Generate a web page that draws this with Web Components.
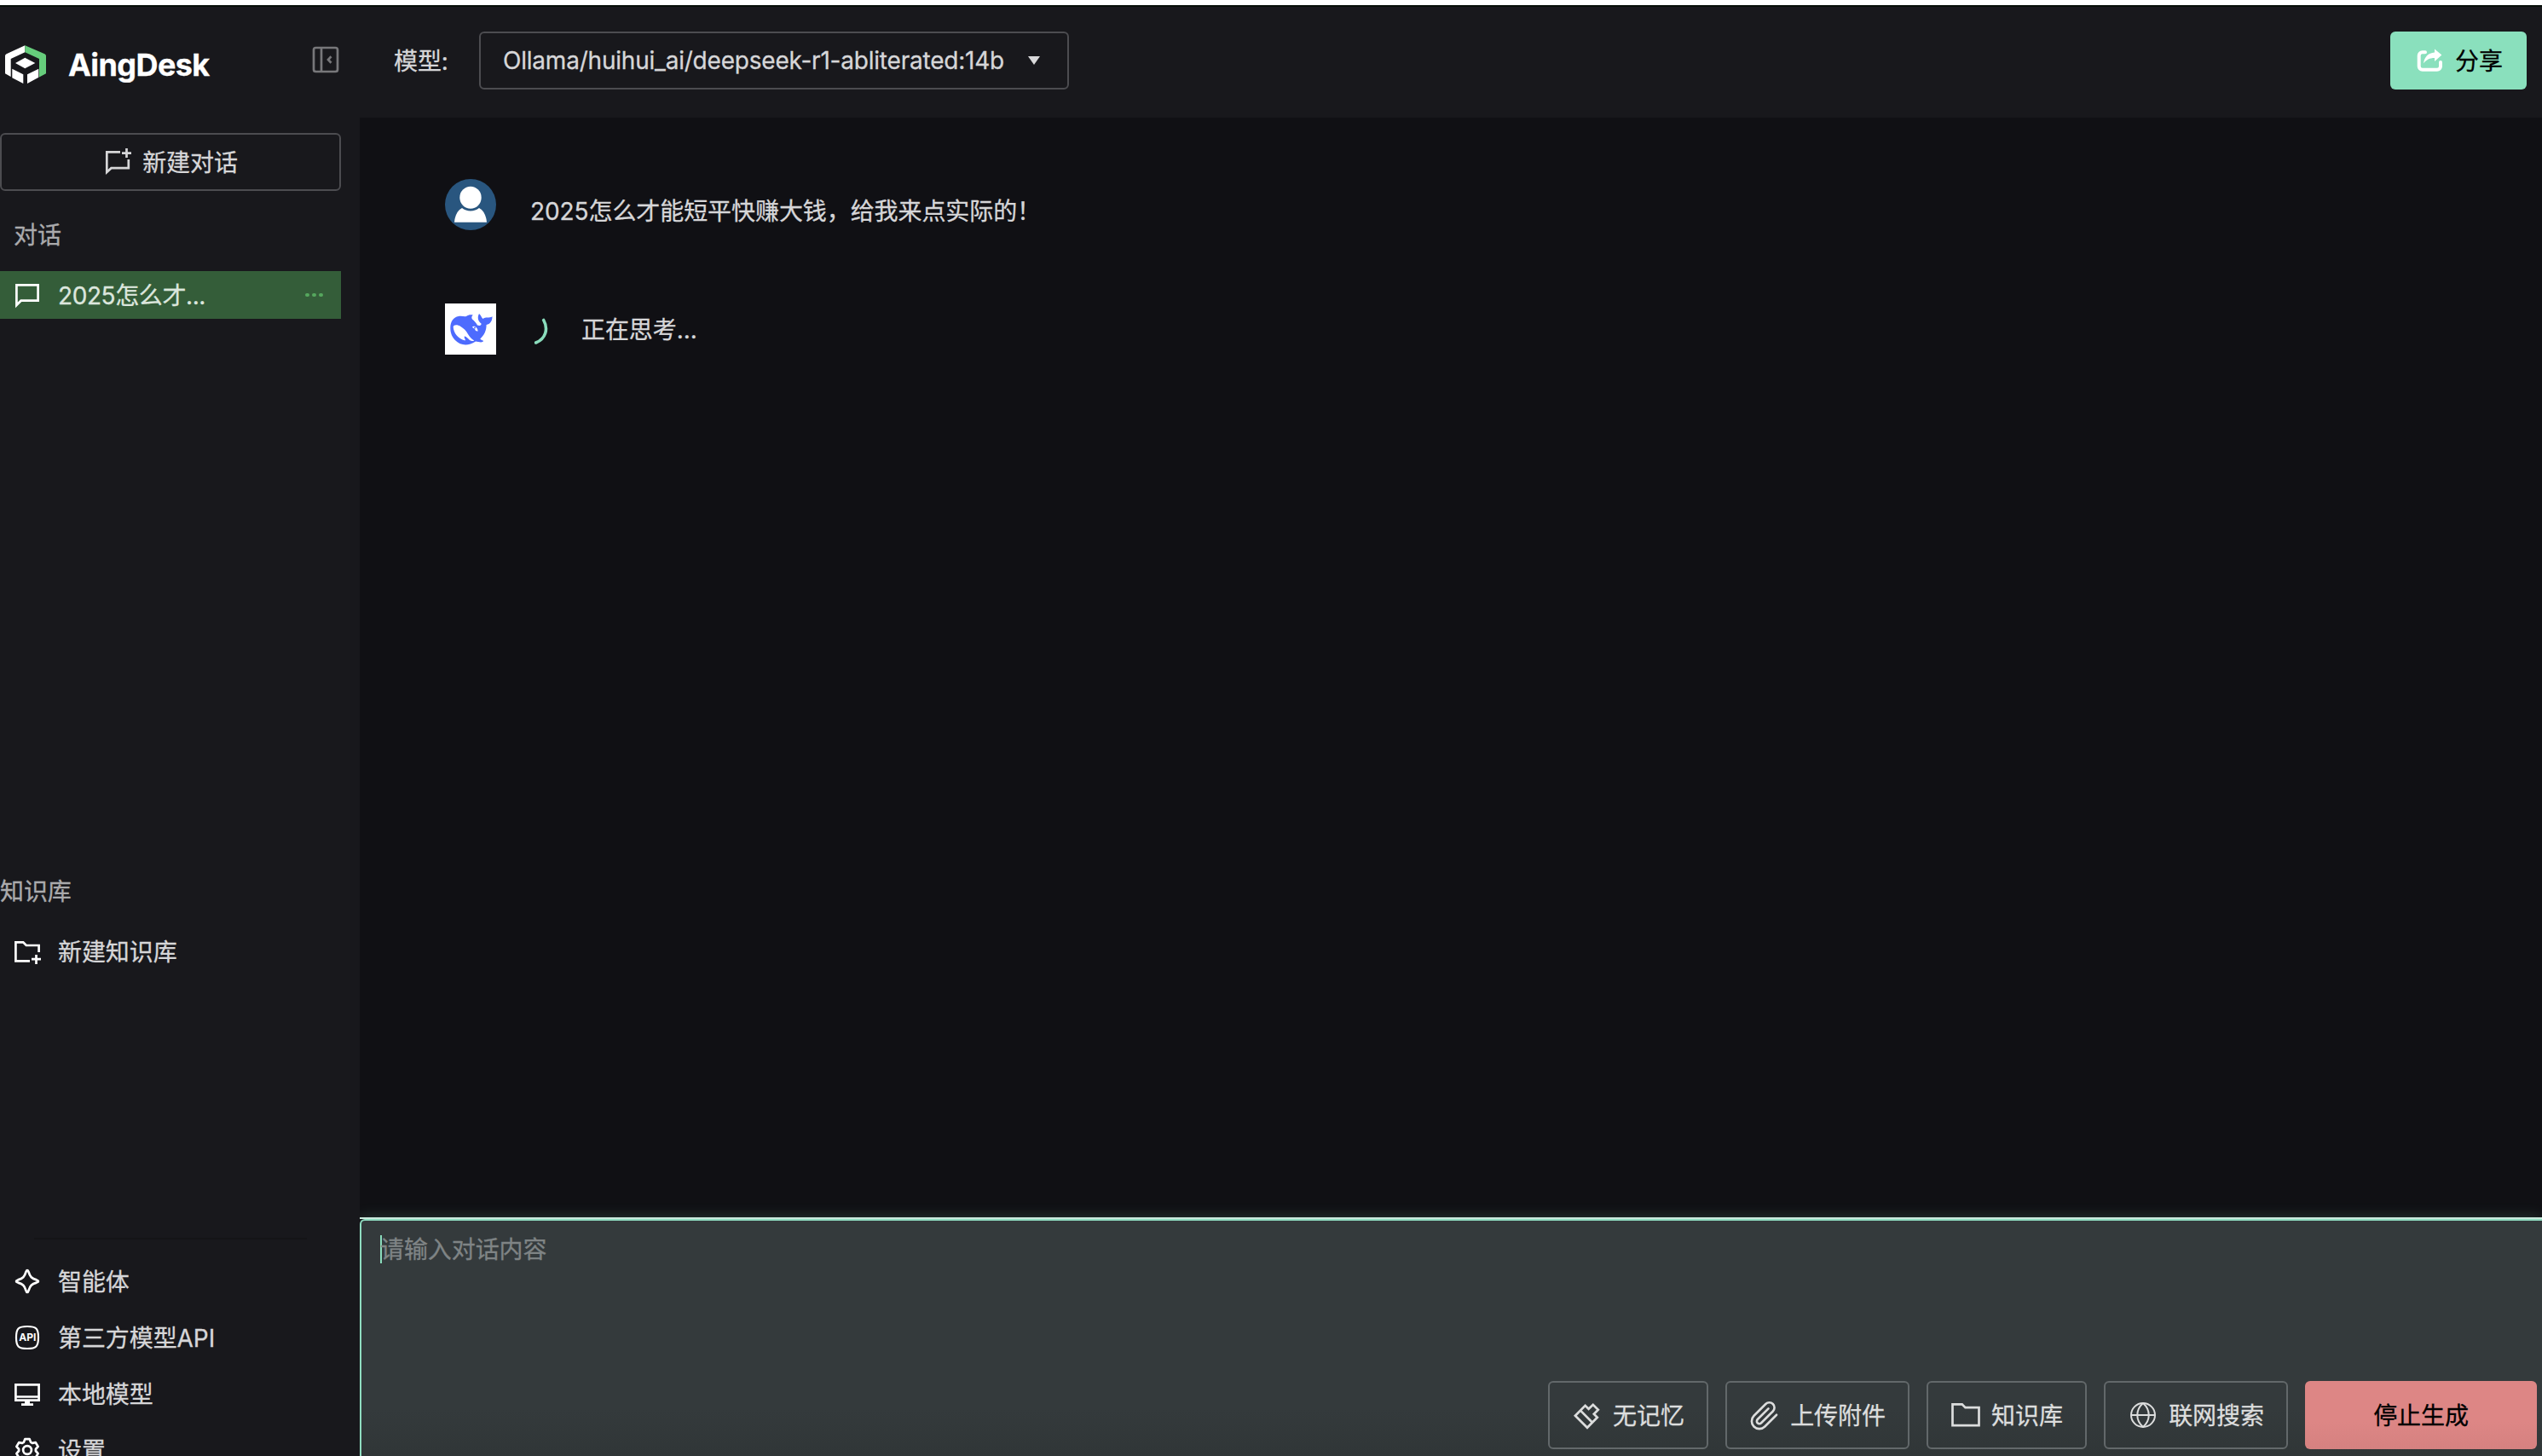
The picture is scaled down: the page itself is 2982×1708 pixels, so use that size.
<!DOCTYPE html>
<html lang="zh-CN">
<head>
<meta charset="utf-8">
<title>AingDesk</title>
<style>
    html, body {
        margin: 0;
        height: 100%;
        overflow: hidden;
        background: #101014;
    }
    body {
        font-family: Inter, "Noto Sans CJK SC", sans-serif;
        font-size: 28px;
        line-height: 40px;
        letter-spacing: -.08px;
        -webkit-text-stroke: .3px;
        color: #d6d6d8;
    }
</style>
</head>
<body>
<desk-app>
    <desk-sidebar slot="sidebar"></desk-sidebar>
    <desk-header slot="header" model="Ollama/huihui_ai/deepseek-r1-abliterated:14b"></desk-header>
    <chat-message who="user">2025怎么才能短平快赚大钱，给我来点实际的！</chat-message>
    <chat-message who="bot" thinking>正在思考...</chat-message>
    <chat-input slot="input" placeholder="请输入对话内容"></chat-input>
</desk-app>

<script>
const icons = {
    panel: `<rect x="2" y="2" width="28" height="28" rx="2.5"/><path d="M11 2V30M22.5 12.3L19 16L22.5 19.7"/>`,
    chat: `<path d="M3.4 4.3H28.6V22.7H8.6L3.4 28Z"/>`,
    chatPlus: `<path d="M19 4.3H3.3V28L8.5 23.2H28.8V13M26.5 0V11M21 5.7H32"/>`,
    folderPlus: `<path d="M19 27.4H2.4V5.4H11.2L14.8 9H29.6V17M26.5 20V31M21 25.2H32"/>`,
    folder: `<path d="M.8 3.3H12L15.8 7.2H31.8V28.2H.8Z" transform="translate(-.3 0)"/>`,
    sparkle: `<path d="M16 3C17 3 17.2 3.8 17.6 5.2C19.2 10.8 21.2 12.8 26.8 14.4C28.2 14.8 29 15 29 16C29 17 28.2 17.2 26.8 17.6C21.2 19.2 19.2 21.2 17.6 26.8C17.2 28.2 17 29 16 29C15 29 14.8 28.2 14.4 26.8C12.8 21.2 10.8 19.2 5.2 17.6C3.8 17.2 3 17 3 16C3 15 3.8 14.8 5.2 14.4C10.8 12.8 12.8 10.8 14.4 5.2C14.8 3.8 15 3 16 3Z"/>`,
    api: `<path stroke-width="2.2" d="M16 3C26.5 3 29 5.5 29 16C29 26.5 26.5 29 16 29C5.5 29 3 26.5 3 16C3 5.5 5.5 3 16 3Z"/><text x="16.3" y="20.4" font-size="12" font-weight="700" letter-spacing="0" text-anchor="middle" textLength="20" fill="currentColor" stroke="none">API</text>`,
    monitor: `<path d="M2.4 5.4H29.6V23.6H2.4ZM2.4 19.5H29.6M9 28.7H23"/><path d="M16 24V28" stroke-width="6"/>`,
    gear: `<path stroke-linejoin="round" d="M11.9 6.9L13.3 3.1H18.7L20.1 6.9L21.9 7.9L25.8 7.2L28.6 11.9L25.9 15V17L28.6 20.1L25.8 24.8L21.9 24.1L20.1 25.1L18.7 28.9H13.3L11.9 25.1L10.1 24.1L6.2 24.8L3.4 20.1L6.1 17V15L3.4 11.9L6.2 7.2L10.1 7.9Z"/><circle cx="16" cy="16" r="4.9"/>`,
    share: `<path stroke-width="4" stroke-linecap="round" d="M11 6.2H7.7A4 4 0 0 0 3.7 10.2V22.7A4 4 0 0 0 7.7 26.7H25A4 4 0 0 0 29 22.7V18"/><path fill="currentColor" stroke="none" d="M22 2.6L30.4 9.5L22 17V13C16 13 12.5 15 9 19.3C10 12 14.5 7 22 6.5Z"/>`,
    brush: `<path d="M1.9 16.8L13.6 4.8L17.6 8.8L22.8 3.8L28.8 9.8L23.8 14.8L27.8 18.8L16 30.8ZM8 10.6L22 24.8"/>`,
    clip: `<path transform="translate(-2.1 -1.8) scale(1.5)" stroke-width="1.75" stroke-linecap="round" d="M21.44 11.7l-9.19 9.19a6 6 0 0 1-8.49-8.49l9.19-9.19a4 4 0 0 1 5.66 5.66l-9.2 9.19a2 2 0 0 1-2.83-2.83l8.49-8.48"/>`,
    globe: `<g stroke-width="2"><circle cx="16" cy="16" r="14"/><path d="M16 2C7 10 7 22 16 30M16 2C25 10 25 22 16 30M2 16H30"/></g>`
};

class deskIcon extends HTMLElement {
    constructor() {
        super();
        this.attachShadow({mode: 'open'});
    }

    connectedCallback() {
        this.shadowRoot.innerHTML = `
            <style>
                :host { display: block; flex: none; width: 32px; height: 32px; }
                svg { display: block; overflow: visible; }
            </style>
            <svg width="32" height="32" viewBox="0 0 32 32" fill="none" stroke="currentColor" stroke-width="2.7">${icons[this.getAttribute('name')]}</svg>`;
    }
}
customElements.define('desk-icon', deskIcon);

// page frame: sidebar on the left, header / messages / input on the right
class deskApp extends HTMLElement {
    constructor() {
        super();
        this.attachShadow({mode: 'open'}).innerHTML = `
            <style>
                :host {
                    display: flex;
                    box-sizing: border-box;
                    height: 1708px;
                    border-top: 6px solid #fff;
                }
                .frame {
                    display: flex;
                    flex: 1;
                    min-width: 0;
                    border-top: 2px solid #060e08;
                }
                main {
                    flex: 1;
                    min-width: 0;
                    display: flex;
                    flex-direction: column;
                }
                .messages {
                    flex: 1;
                    display: flex;
                    flex-direction: column;
                    gap: 86px;
                    padding: 72px 100px 0;
                }
            </style>
            <div class="frame">
                <slot name="sidebar"></slot>
                <main>
                    <slot name="header"></slot>
                    <div class="messages"><slot></slot></div>
                    <slot name="input"></slot>
                </main>
            </div>`;
    }
}
customElements.define('desk-app', deskApp);

class navItem extends HTMLElement {
    constructor() {
        super();
        this.attachShadow({mode: 'open'});
    }

    connectedCallback() {
        this.shadowRoot.innerHTML = `
            <style>
                :host {
                    display: flex;
                    align-items: center;
                    box-sizing: border-box;
                    height: 56px;
                    width: 400px;
                    padding: 0 21px 0 16px;
                    gap: 20px;
                }
                :host([active]) { background: #345d39; color: #dce6dd; letter-spacing: -.4px; }
                desk-icon { color: #fff; }
                span { flex: 1; padding-top: 2px; white-space: nowrap; }
                i {
                    display: none;
                    gap: 3.6px;
                }
                :host([active]) i { display: flex; }
                b { width: 4.6px; height: 4.6px; border-radius: 50%; background: #55a75e; }
            </style>
            <desk-icon name="${this.getAttribute('icon')}"></desk-icon>
            <span><slot></slot></span>
            <i><b></b><b></b><b></b></i>`;
    }
}
customElements.define('nav-item', navItem);

class deskSidebar extends HTMLElement {
    constructor() {
        super();
        this.attachShadow({mode: 'open'}).innerHTML = `
            <style>
                :host {
                    display: flex;
                    flex-direction: column;
                    flex: none;
                    box-sizing: border-box;
                    width: 422px;
                    background: #18181c;
                    overflow: hidden;
                }
                .brand {
                    display: flex;
                    align-items: center;
                    height: 52px;
                    padding: 42px 24px 0 5px;
                }
                .brand h1 {
                    flex: 1;
                    margin: 0 0 0 26px;
                    font-size: 36px;
                    letter-spacing: -.6px;
                    color: #fff;
                }
                .brand desk-icon { color: #77777a; margin-top: -12px; }
                .new {
                    display: flex;
                    align-items: center;
                    justify-content: center;
                    gap: 13px;
                    box-sizing: border-box;
                    width: 400px;
                    height: 68px;
                    margin-top: 54px;
                    padding-left: 1px;
                    border: 2px solid #4c4c50;
                    border-radius: 6px;
                }
                .new span { padding-top: 2px; }
                .label { color: #aaaaac; }
                .chats { height: 802px; }
                .chats .label { padding: 32px 16px 22px; }
                .library { height: 426px; }
                .library .label { padding: 0 0 22px; }
                hr {
                    width: 320px;
                    height: 2px;
                    margin: 0 0 21px 40px;
                    border: 0;
                    background: #141417;
                    flex: none;
                }
                footer { display: flex; flex-direction: column; gap: 10px; }
                .chats, .library, footer, .brand, .new { flex-shrink: 0; }
            </style>
            <div class="brand">
                <svg width="49" height="46" viewBox="0 0 49 46" fill="#fff">
                    <path d="M24.3.3L2.6 10.2Q1 11 1 12.6V33.3L7.7 37V16L24.3 8.3Z"/>
                    <path fill="#66cd7c" d="M24.3.3L47.4 10.2Q49 11 49 12.6V33.3L41 37.5V16L24.3 8.3Z"/>
                    <path d="M24.3 14.7L36.3 21L24.3 27.3L13 21ZM9.3 27.7L22.3 34.3V45L9.3 38.3ZM27 45V34.3L40.3 27.7V37.7Z"/>
                </svg>
                <h1>AingDesk</h1>
                <desk-icon name="panel"></desk-icon>
            </div>
            <div class="new"><desk-icon name="chatPlus"></desk-icon><span>新建对话</span></div>
            <div class="chats">
                <div class="label">对话</div>
                <nav-item icon="chat" active>2025怎么才...</nav-item>
            </div>
            <div class="library">
                <div class="label">知识库</div>
                <nav-item icon="folderPlus">新建知识库</nav-item>
            </div>
            <hr>
            <footer>
                <nav-item icon="sparkle">智能体</nav-item>
                <nav-item icon="api">第三方模型API</nav-item>
                <nav-item icon="monitor">本地模型</nav-item>
                <nav-item icon="gear">设置</nav-item>
            </footer>`;
    }
}
customElements.define('desk-sidebar', deskSidebar);

class deskHeader extends HTMLElement {
    constructor() {
        super();
        this.attachShadow({mode: 'open'});
    }

    connectedCallback() {
        this.shadowRoot.innerHTML = `
            <style>
                :host {
                    display: flex;
                    align-items: center;
                    flex: none;
                    box-sizing: border-box;
                    height: 130px;
                    padding: 0 18px 4px 40px;
                    background: #18181c;
                }
                label { width: 100px; padding-top: 2px; }
                .select {
                    display: flex;
                    align-items: center;
                    justify-content: space-between;
                    box-sizing: border-box;
                    width: 692px;
                    height: 68px;
                    padding: 0 32px 0 26px;
                    border: 2px solid #4c4c50;
                    border-radius: 6px;
                    letter-spacing: -.21px;
                }
                .select i {
                    border: 7px solid transparent;
                    border-top: 10px solid #d9d9db;
                    border-bottom: 0;
                }
                .share {
                    display: flex;
                    align-items: center;
                    gap: 14px;
                    box-sizing: border-box;
                    width: 160px;
                    height: 68px;
                    margin-left: auto;
                    padding-left: 30px;
                    border-radius: 6px;
                    background: #8ae0bd;
                    color: #000;
                }
                .share desk-icon { color: #fff; }
                .share span { padding-top: 2px; }
            </style>
            <label>模型:</label>
            <div class="select"><span>${this.getAttribute('model')}</span><i></i></div>
            <div class="share"><desk-icon name="share"></desk-icon><span>分享</span></div>`;
    }
}
customElements.define('desk-header', deskHeader);

const avatars = {
    user: `
        <circle cx="30" cy="30" r="30" fill="#29567f"/>
        <ellipse cx="30" cy="21.8" rx="12.7" ry="13" fill="#fff"/>
        <path fill="#fff" d="M11 50.7C11.6 43 14.5 37 20 34C25 38.6 35 38.6 40 34C45.5 37 48.4 43 49 50.7Z"/>`,
    bot: `
        <rect width="60" height="60" fill="#fff"/>
        <path fill="#4d6bfe" d="M6.3 28C6.5 21 10 16 16 15C20 14.3 23 16 25 15C27.5 13.3 30 12.8 32.8 13.6C31 15 31 17 32 18.5C34.5 20.5 36.5 22.5 38 25.5C41 26.5 43 25.5 42.5 23.5C39 21 37.5 16.5 40 12C42 13.5 42.5 16 44.5 18C47.5 15.5 52 17.5 55.5 15.3C55.5 20.5 53 24.5 48.6 25C48.6 32 46 37 41.3 41.5C43 43.5 45 43 45 44.3C44 46.3 39 45 36 44.5C27 50.5 18 49 13 44C8.5 40 6.2 35 6.3 28Z"/>
        <path fill="#fff" d="M9.7 27.5C10 24.5 15 24.7 18 26.7C22 29.3 25 32 27 36C29 39.5 31 41.5 34.3 43.5C31.5 44.8 29 43.5 27.5 41.5C26 40 24.5 38.5 22.8 38.5C22 40.5 24.5 42 23.7 43.5C15 41.5 10 34 9.7 27.5ZM32 27.5C34.5 25.5 38.5 28.5 38.6 32.5C36.5 33 35.3 31.5 35 29.8C34 29.5 33 29 32 27.5Z"/>
        <circle cx="35" cy="28.6" r="1" fill="#4d6bfe"/>`
};

class chatMessage extends HTMLElement {
    constructor() {
        super();
        this.attachShadow({mode: 'open'});
    }

    connectedCallback() {
        const spinner = this.hasAttribute('thinking') ? `
            <svg width="60" height="36" viewBox="0 0 60 36" fill="none" stroke="#8adcbc" stroke-width="3.6" stroke-linecap="round">
                <path d="M15.7 7.5C21.5 18 18 29.5 6.7 34"/>
            </svg>` : '';
        this.shadowRoot.innerHTML = `
            <style>
                :host { display: flex; gap: 40px; height: 60px; }
                svg { display: block; flex: none; }
                div { display: flex; align-items: center; white-space: nowrap; }
                span { padding-top: 1px; }
                :host([who=user]) div { padding-top: 14px; }
            </style>
            <svg width="60" height="60" viewBox="0 0 60 60">${avatars[this.getAttribute('who')]}</svg>
            <div>${spinner}<span><slot></slot></span></div>`;
    }
}
customElements.define('chat-message', chatMessage);

class toolButton extends HTMLElement {
    constructor() {
        super();
        this.attachShadow({mode: 'open'});
    }

    connectedCallback() {
        const icon = this.getAttribute('icon');
        this.shadowRoot.innerHTML = `
            <style>
                :host {
                    display: flex;
                    align-items: center;
                    justify-content: center;
                    gap: 14px;
                    box-sizing: border-box;
                    height: 80px;
                    padding-left: 2px;
                    border: 2px solid #62686a;
                    border-radius: 6px;
                    color: #dcdddd;
                    white-space: nowrap;
                }
                :host([danger]) {
                    padding: 0;
                    border: 0;
                    background: linear-gradient(#dd8685 60%, #d58180);
                    color: #000;
                }
                span { padding-top: 2px; }
            </style>
            ${icon ? `<desk-icon name="${icon}"></desk-icon>` : ''}<span><slot></slot></span>`;
    }
}
customElements.define('tool-button', toolButton);

class chatInput extends HTMLElement {
    constructor() {
        super();
        this.attachShadow({mode: 'open'});
    }

    connectedCallback() {
        this.shadowRoot.innerHTML = `
            <style>
                :host {
                    display: block;
                    flex: none;
                    height: 280px;
                    border-top: 2px solid #cbe9dd;
                    box-sizing: border-box;
                    box-shadow: 0 0 16px rgba(138, 220, 188, .2);
                    clip-path: inset(-24px 0 0 0);
                }
                .box {
                    display: flex;
                    flex-direction: column;
                    justify-content: space-between;
                    box-sizing: border-box;
                    height: 278px;
                    padding: 17px 6px 8px 22px;
                    border: 2px solid #8fdcc0;
                    border-width: 2px 0 0 2px;
                    border-radius: 6px 0 0 0;
                    background: linear-gradient(#343a3c 80%, #303637);
                }
                .text { display: flex; align-items: center; height: 33px; color: #7f8485; }
                .caret { width: 2px; height: 33px; margin-right: -2px; background: #8adcbc; }
                .tools {
                    display: grid;
                    grid-template-columns: 188px 216px 188px 216px 272px;
                    justify-content: end;
                    gap: 20px;
                }
            </style>
            <div class="box">
                <div class="text"><div class="caret"></div><span>${this.getAttribute('placeholder')}</span></div>
                <div class="tools">
                    <tool-button icon="brush">无记忆</tool-button>
                    <tool-button icon="clip">上传附件</tool-button>
                    <tool-button icon="folder">知识库</tool-button>
                    <tool-button icon="globe">联网搜索</tool-button>
                    <tool-button danger>停止生成</tool-button>
                </div>
            </div>`;
    }
}
customElements.define('chat-input', chatInput);
</script>
</body>
</html>
